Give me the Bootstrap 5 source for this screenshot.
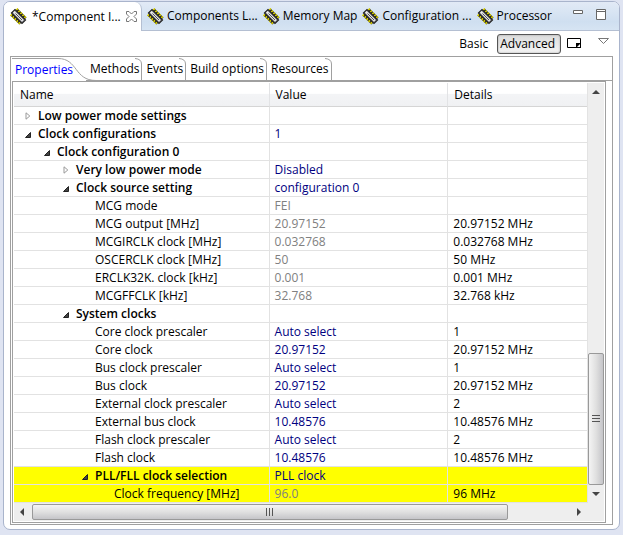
<!DOCTYPE html>
<html lang="en">
<head>
<meta charset="utf-8">
<meta name="viewport" content="width=device-width, initial-scale=1">
<title>Component Inspector</title>
<link href="https://cdn.jsdelivr.net/npm/bootstrap@5.3.0/dist/css/bootstrap.min.css" rel="stylesheet">
<style>
body{font-family:"Open Sans","Noto Sans",sans-serif;font-size:12px;line-height:16px;color:#000;background:#dfe4f2;padding:1px 3px 4px;overflow:hidden}
button{font:inherit;color:inherit;background:none;border:0;padding:0;white-space:nowrap}
svg{display:block;flex:none}
.view{border:1px solid #a9b4cc;border-radius:7px;background:#fff;overflow:hidden}
.viewbar{height:29px;background:linear-gradient(#e2eaf6,#cfdff0 70%,#d6e4f3);border-bottom:1px solid #b4bfd2}
.vtab{height:28px;padding-left:5px;gap:3px}
.vtab.on{height:29px;width:138px;background:#fff;border-right:1px solid #b4bfd2;border-radius:0 7px 0 0;padding-left:6px;gap:5px}
.wctl{margin-right:13px}
.tools{height:25px;gap:6px}
.adv{border:1px solid #555;border-radius:3px;background:linear-gradient(#dcdcdc,#f4f4f4);height:20px;padding:0 5px 0 2px;margin-left:3px;box-shadow:inset 0 0 2px #999}
.vmenu{margin:0 10px 6px 10px}
.outer{margin:0 6px;border:1px solid #a0a0a0;padding:1px 0 1px 1px}
.ftabs{height:23px}
.ftab{height:23px;padding:0 3px 0 4px;position:relative;border-bottom:1px solid #a0a0a0}
.ftab svg{position:absolute;right:0;top:0}
.ftab.on{color:#00f;width:74px;text-align:left;padding-left:3px;border:0}
.ftab.on svg{left:0;right:auto}
.fill{border-bottom:1px solid #a0a0a0}
.panel{border:1px solid #a0a0a0;margin-right:6px;padding:1px}
.props{table-layout:fixed;width:100%;border-collapse:separate;border-spacing:0}
.props th{height:24px;padding:0 6px;font-weight:400;border-right:1px solid #e2e3e5;border-bottom:1px solid #d5d5d5;background:linear-gradient(#fff 45%,#f3f4f6 50%,#f0f1f3)}
.props td{height:18px;padding:0 5px;line-height:17px;border-right:1px solid #e2e2e2;border-bottom:1px solid #e2e2e2;white-space:nowrap;color:#000}
.props td:nth-child(2){color:#000080}
.props td.off{color:#808080}
.props tr>:last-child{border-right:0}
.props .hl td{background:#ff0}
.node{gap:7px}
.grp{font-weight:600}
.l0{padding-left:6px}.l1{padding-left:25px}.l2{padding-left:44px}.l3{padding-left:63px}.l4{padding-left:82px}
.vsb{width:17px;background:#eee;border-left:1px solid #e3e3e3}
.hsb{height:18px;background:#eee;padding:1px 0}
.thumb{border:1px solid #999;border-radius:2px}
.vsb .thumb{background:linear-gradient(90deg,#f4f4f4,#e0e0e0 50%,#c5c5c9)}
.hsb .thumb{background:linear-gradient(#f4f4f4,#e0e0e0 50%,#c5c5c9)}
</style>
<script src="https://cdn.jsdelivr.net/npm/bootstrap@5.3.0/dist/js/bootstrap.bundle.min.js"></script>
</head>
<body>
<svg width="0" height="0" class="position-absolute" aria-hidden="true">
<symbol id="chip" viewBox="0 0 17 17"><path d="M6.500 1.500 15.500 10.500M1.500 6.500 10.500 15.500" stroke="#222" stroke-width="3"/><path d="M6.500 .8 16 10.300M.8 6.500 10.300 16" stroke="#d9d000" stroke-width="2.400" stroke-dasharray="1.600 1.200"/><path d="M1.500 5 5 1.500 15.500 12 12 15.500Z" fill="#8d8d95" stroke="#222" stroke-width="1.200"/><path d="M3 4.500 4.500 3 13.500 12 12 13.500Z" fill="#eee"/><path d="M5.500 5.500 12 12" stroke="#555"/></symbol>
<symbol id="shut" viewBox="0 0 6 8"><path d="M1 .8 4.800 4 1 7.200Z" fill="#fff" stroke="#999"/></symbol>
<symbol id="open" viewBox="0 0 6 8"><path d="M5.500 2.500V7.500H.5Z" fill="#444" stroke="#222"/></symbol>
</svg>
<main class="view">
<div class="viewbar d-flex" role="tablist">
<button class="vtab on d-flex align-items-center" role="tab" aria-selected="true"><svg width="17" height="17"><use href="#chip"/></svg><span>*Component I...</span><svg width="11" height="11" viewBox="0 0 11 11"><path d="M.5.5H3L5.500 3 8 .5H10.500V3L8 5.500 10.500 8V10.500H8L5.500 8 3 10.500H.5V8L3 5.500.5 3Z" fill="#fff" stroke="#777"/></svg></button>
<button class="vtab d-flex align-items-center" role="tab"><svg width="17" height="17"><use href="#chip"/></svg><span>Components L...</span></button>
<button class="vtab d-flex align-items-center" role="tab"><svg width="17" height="17"><use href="#chip"/></svg><span>Memory Map</span></button>
<button class="vtab d-flex align-items-center" role="tab"><svg width="17" height="17"><use href="#chip"/></svg><span>Configuration ...</span></button>
<button class="vtab d-flex align-items-center" role="tab"><svg width="17" height="17"><use href="#chip"/></svg><span>Processor</span></button>
<button class="wctl ms-auto pb-1" aria-label="Minimize"><svg width="10" height="12"><path d="M.5 2.500H9.500V5.500H.5Z" fill="#fff" stroke="#666"/></svg></button>
<button class="wctl pb-1" aria-label="Maximize"><svg width="10" height="12"><path d="M.5 1.500H9.500V11.500H.5ZM0 3.500H10" fill="#fff" stroke="#666"/></svg></button>
</div>
<div class="tools d-flex align-items-center justify-content-end">
<button>Basic</button><button class="adv">Advanced</button>
<button aria-label="Pin view"><svg width="15" height="11"><path d="M.5.5H13.500V9.500H.5Z" fill="#fff" stroke="#000"/><path d="M9 5H14V10H9Z"/><path d="M10 9 13 6V9Z" fill="#fff"/></svg></button>
<button class="vmenu" aria-label="View menu"><svg width="11" height="6"><path d="M.5.5H10.500L5.500 5.500Z" fill="#fff" stroke="#777"/></svg></button>
</div>
<section class="outer mb-1">
<div class="ftabs d-flex" role="tablist">
<button class="ftab on" role="tab" aria-selected="true">Properties<svg width="84" height="24"><path d="M0 .5H46C66 .5 62 22.500 84 22.500" fill="none" stroke="#a0a0a0"/></svg></button>
<button class="ftab" role="tab">Methods<svg width="7" height="23"><path d="M0 .5Q6.500 1 6.500 6V23" fill="none" stroke="#a0a0a0"/></svg></button>
<button class="ftab" role="tab">Events<svg width="7" height="23"><path d="M0 .5Q6.500 1 6.500 6V23" fill="none" stroke="#a0a0a0"/></svg></button>
<button class="ftab" role="tab">Build options<svg width="7" height="23"><path d="M0 .5Q6.500 1 6.500 6V23" fill="none" stroke="#a0a0a0"/></svg></button>
<button class="ftab" role="tab">Resources<svg width="7" height="23"><path d="M0 .5Q6.500 1 6.500 6V23" fill="none" stroke="#a0a0a0"/></svg></button>
<div class="fill flex-grow-1"></div>
</div>
<div class="panel">
<div class="d-flex">
<table class="props">
<colgroup><col style="width:44.600%"><col style="width:31.200%"><col></colgroup>
<thead><tr><th>Name</th><th>Value</th><th>Details</th></tr></thead>
<tbody id="rows"></tbody>
</table>
<div class="vsb d-flex flex-column align-items-center flex-shrink-0">
<svg width="8" height="20"><path d="M0 11 4 7 8 11Z" fill="#444"/></svg>
<div style="flex:251"></div>
<div class="thumb w-100 d-flex align-items-center justify-content-center" style="flex:130"><svg width="8" height="8"><path d="M0 .5H8M0 3.500H8M0 6.500H8" stroke="#555"/></svg></div>
<svg width="8" height="18"><path d="M0 7 4 11 8 7Z" fill="#444"/></svg>
</div>
</div>
<div class="hsb d-flex align-items-center">
<svg width="18" height="8"><path d="M10 0 6 4 10 8Z" fill="#444"/></svg>
<div class="thumb h-100 d-flex align-items-center justify-content-center" style="flex:477"><svg width="8" height="8"><path d="M.5 0V8M3.500 0V8M6.500 0V8" stroke="#555"/></svg></div>
<div style="flex:60"></div>
<svg width="36" height="8"><path d="M9 0 13 4 9 8Z" fill="#444"/></svg>
</div>
</div>
</section>
</main>
<script>
// level, state (o: open, c: closed, blank: leaf), name, value, details, value is read-only
const data=[
[0,'c','Low power mode settings','',''],
[0,'o','Clock configurations','1',''],
[1,'o','Clock configuration 0','',''],
[2,'c','Very low power mode','Disabled',''],
[2,'o','Clock source setting','configuration 0',''],
[3,'','MCG mode','FEI','',1],
[3,'','MCG output [MHz]','20.97152','20.97152 MHz',1],
[3,'','MCGIRCLK clock [MHz]','0.032768','0.032768 MHz',1],
[3,'','OSCERCLK clock [MHz]','50','50 MHz',1],
[3,'','ERCLK32K. clock [kHz]','0.001','0.001 MHz',1],
[3,'','MCGFFCLK [kHz]','32.768','32.768 kHz',1],
[2,'o','System clocks','',''],
[3,'','Core clock prescaler','Auto select','1'],
[3,'','Core clock','20.97152','20.97152 MHz'],
[3,'','Bus clock prescaler','Auto select','1'],
[3,'','Bus clock','20.97152','20.97152 MHz'],
[3,'','External clock prescaler','Auto select','2'],
[3,'','External bus clock','10.48576','10.48576 MHz'],
[3,'','Flash clock prescaler','Auto select','2'],
[3,'','Flash clock','10.48576','10.48576 MHz'],
[3,'o','PLL/FLL clock selection','PLL clock',''],
[4,'','Clock frequency [MHz]','96.0','96 MHz',1]];
document.getElementById('rows').innerHTML=data.map(([l,s,n,v,d,r],i)=>`<tr class="${i>19?'hl':''}"><td><div class="node d-flex align-items-center l${l} ${s?'grp':''}"><svg width="6" height="8">${s?`<use href="#${s=='o'?'open':'shut'}"/>`:''}</svg>${n}</div></td><td class="${r?'off':''}">${v}</td><td>${d}</td></tr>`).join('');
</script>
</body>
</html>
